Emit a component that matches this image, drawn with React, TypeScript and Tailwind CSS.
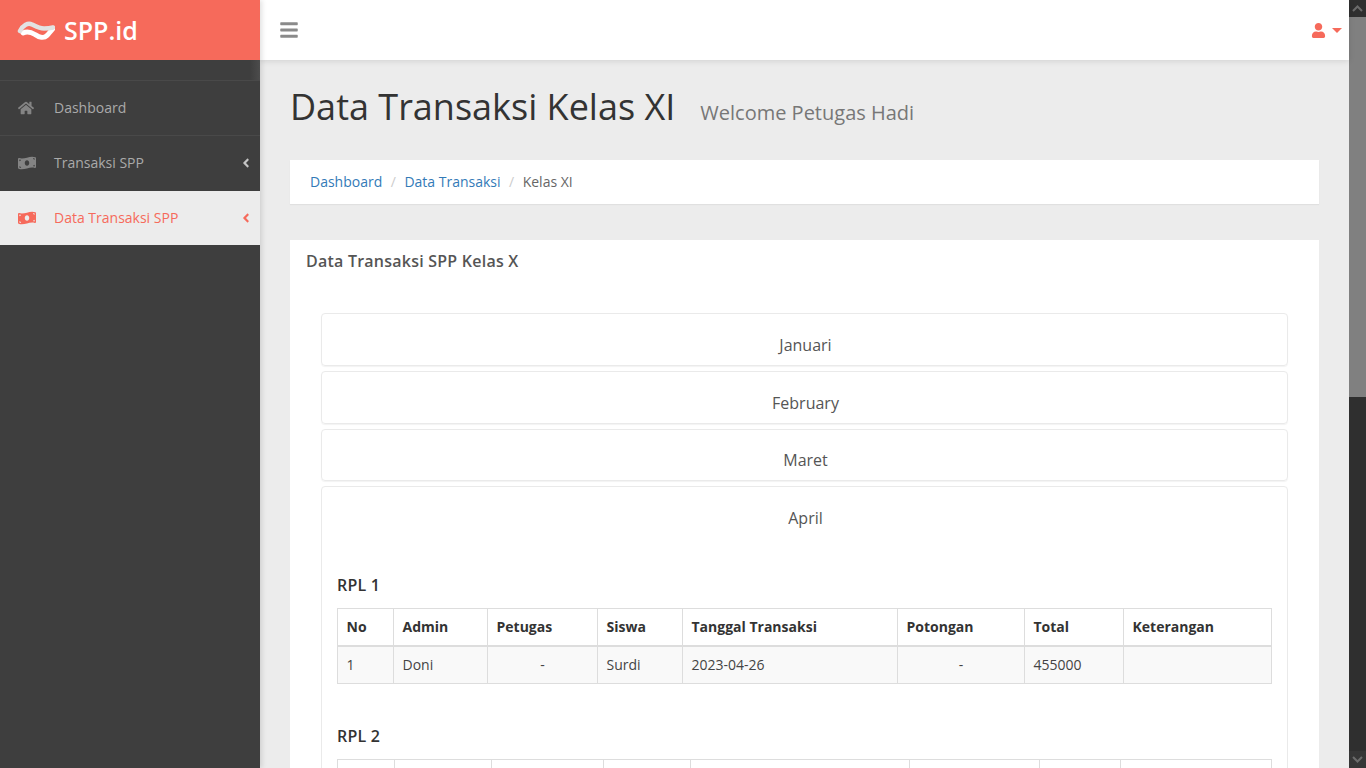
import { FaAngleLeft, FaBars, FaHome, FaMoneyBillWave, FaUser } from 'react-icons/fa'

const months = [
  { label: 'Januari', box: 'h-[53px]', text: 'pt-[20px]' },
  { label: 'February', box: 'h-[53px]', text: 'pt-[20px]' },
  { label: 'Maret', box: 'h-[52px]', text: 'pt-[19px]' },
]

const headers = ['No', 'Admin', 'Petugas', 'Siswa', 'Tanggal Transaksi', 'Potongan', 'Total', 'Keterangan']
const row = ['1', 'Doni', '-', 'Surdi', '2023-04-26', '-', '455000', '']

const Logo = () => (
  <svg width="38" height="21" viewBox="0 0 38 21" className="shrink-0">
    <path d="M6 13 C10 11 14 12 18 14.5 C22 17.5 27 18.5 30 15.5 C32 13.5 34 11 36 8.5" fill="none" stroke="#ffffff" strokeWidth="5" strokeLinecap="round" />
    <path d="M3 11 C6 5 11 2.5 15 4.5 C19 6.5 22 8.5 27 8.5 C31 8.5 34 8 36 7.5" fill="none" stroke="#e2e2e2" strokeWidth="4.5" strokeLinecap="round" />
  </svg>
)

const SideItem = ({ icon, label, arrow, active, height }: { icon: React.ReactNode; label: string; arrow?: boolean; active?: boolean; height: string }) => (
  <div
    className={
      active
        ? `${height} flex items-center pl-[18px] pr-[10px] bg-[#ececec] text-[#f66a5b]`
        : `${height} flex items-center pl-[18px] pr-[10px] border-t border-[#494949] text-[#aaaaaa]`
    }
  >
    <span className={active ? 'w-[36px] text-[#f66a5b]' : 'w-[36px] text-[#848484]'}>{icon}</span>
    <span className="flex-1 text-sm">{label}</span>
    {arrow && <FaAngleLeft className={active ? 'text-[#f66a5b] text-sm translate-x-[3px]' : 'text-[#c4c4c4] text-sm translate-x-[3px]'} />}
  </div>
)

const DataTable = ({ widths, cells }: { widths: number[]; cells?: boolean }) => (
  <table className="w-[934px] table-fixed border-collapse text-sm text-[#444444]">
    <colgroup>
      {widths.map((w, i) => (
        <col key={i} style={{ width: w }} />
      ))}
    </colgroup>
    <thead>
      <tr className="h-[37px]">
        {headers.map((h) => (
          <th key={h} className="border border-[#dddddd] border-b-2 pl-[8.5px] pr-2 text-left font-bold text-[#333333]">
            {h}
          </th>
        ))}
      </tr>
    </thead>
    {cells && (
      <tbody>
        <tr className="h-[38px] bg-[#f9f9f9]">
          {row.map((c, i) => (
            <td key={i} className={c === '-' ? 'border border-[#dddddd] px-2 text-center' : 'border border-[#dddddd] pl-[8.5px] pr-2'}>
              {c}
            </td>
          ))}
        </tr>
      </tbody>
    )}
  </table>
)

const App = () => {
  return (
    <div className="flex h-screen overflow-hidden bg-[#ececec] font-['Open_Sans',sans-serif]">
      <aside className="w-[260px] shrink-0 flex flex-col bg-[#3e3e3e] relative z-10 shadow-[2px_0_5px_rgba(0,0,0,0.12)]">
        <div className="h-[60px] flex items-center gap-[9px] pl-[17px] bg-[#f66a5b]">
          <Logo />
          <span className="pt-[2px] text-[25px] font-semibold text-white">SPP.id</span>
        </div>
        <div className="h-[20px] bg-gradient-to-r from-[#3e3e3e] from-[96%] to-[#4c4c4c]" />
        <nav>
          <SideItem height="h-[55px]" icon={<FaHome className="text-base" />} label="Dashboard" />
          <SideItem height="h-[56px] pb-[1px]" icon={<FaMoneyBillWave className="text-lg" />} label="Transaksi SPP" arrow />
          <SideItem height="h-[54px]" icon={<FaMoneyBillWave className="text-lg" />} label="Data Transaksi SPP" arrow active />
        </nav>
      </aside>

      <div className="flex-1 min-w-0 flex flex-col">
        <header className="h-[60px] shrink-0 flex items-center justify-between pl-[19px] pr-[7px] bg-white shadow-[0_1px_6px_rgba(0,0,0,0.12)] relative">
          <FaBars className="text-[#8a8a8a] text-[20px]" />
          <div className="flex items-center gap-[6px] text-[#f66a5b]">
            <FaUser className="text-[15px]" />
            <span className="w-0 h-0 border-x-[5px] border-x-transparent border-t-[5px] border-t-[#f66a5b]" />
          </div>
        </header>

        <main className="flex-1 min-h-0 overflow-hidden pl-[30px] pr-[30px]">
          <div className="flex items-baseline gap-[25px] h-[100px] pt-[20px]">
            <h1 className="text-[36px] leading-[54px] text-[#333333]">Data Transaksi Kelas XI</h1>
            <span className="text-xl text-[#777777]">Welcome Petugas Hadi</span>
          </div>

          <div className="h-[44px] flex items-center gap-[8.5px] px-[20px] bg-white text-sm shadow-[0_1px_1px_rgba(0,0,0,0.05)]">
            <span className="text-[#337ab7]">Dashboard</span>
            <span className="text-[#cccccc]">/</span>
            <span className="text-[#337ab7]">Data Transaksi</span>
            <span className="text-[#cccccc]">/</span>
            <span className="text-[#666666]">Kelas XI</span>
          </div>

          <section className="mt-[36px] bg-white pt-[10px] pl-[16px] pr-[16px] pb-[40px]">
            <h2 className="text-base tracking-[0.23px] leading-[22px] font-semibold text-[#555555]">Data Transaksi SPP Kelas X</h2>

            <div className="mt-[41px] ml-[15px] mr-[15px] flex flex-col gap-[5px]">
              {months.map((m) => (
                <div key={m.label} className={`${m.box} ${m.text} pl-[2px] rounded border border-[#eaeaea] text-center text-base leading-[22px] text-[#555555] shadow-[0_1px_1px_rgba(0,0,0,0.05)]`}>
                  {m.label}
                </div>
              ))}

              <div className="rounded border border-[#eaeaea] px-[15px] pt-[20px] pb-[40px]">
                <div className="pl-[2px] text-center text-base leading-[22px] text-[#555555]">April</div>
                <h3 className="mt-[45px] text-base tracking-[0.2px] leading-[22px] font-semibold text-[#333333]">RPL 1</h3>
                <div className="mt-[12px]">
                  <DataTable widths={[56, 94, 110, 85, 215, 127, 99, 148]} cells />
                </div>
                <h3 className="mt-[41px] text-base tracking-[0.2px] leading-[22px] font-semibold text-[#333333]">RPL 2</h3>
                <div className="mt-[12px]">
                  <DataTable widths={[57, 97, 112, 87, 219, 130, 81, 151]} />
                </div>
              </div>
            </div>
          </section>
        </main>
      </div>

      <div className="w-[17px] shrink-0 flex flex-col bg-[#2f2f2f]">
        <div className="h-[17px] flex items-center justify-center">
          <svg width="11" height="7" viewBox="0 0 11 7">
            <path d="M1 6 L5.5 1.5 L10 6" fill="none" stroke="#6b6b6b" strokeWidth="2" />
          </svg>
        </div>
        <div className="h-[380px] bg-[#808080]" />
        <div className="flex-1" />
        <div className="h-[17px] flex items-center justify-center bg-[#363636]">
          <svg width="11" height="7" viewBox="0 0 11 7">
            <path d="M1 1 L5.5 5.5 L10 1" fill="none" stroke="#6b6b6b" strokeWidth="2" />
          </svg>
        </div>
      </div>
    </div>
  )
}

export default App
